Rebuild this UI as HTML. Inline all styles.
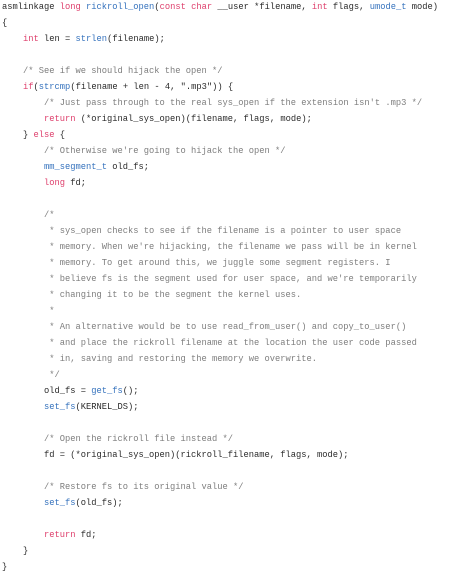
<!DOCTYPE html>
<html><head><meta charset="utf-8"><style>
html,body{margin:0;padding:0;background:#fff;width:461px;height:567px;overflow:hidden}
pre{margin:0;position:absolute;left:2px;top:-1px;font-family:"Liberation Mono",monospace;font-size:8.75px;line-height:16px;color:#2a2a2a}
.k{color:#de3f6c}.f{color:#3572bd}.c{color:#7e7e7e}
</style></head><body><pre>asmlinkage <span class="k">long</span> <span class="f">rickroll_open</span>(<span class="k">const</span> <span class="k">char</span> __user *filename, <span class="k">int</span> flags, <span class="f">umode_t</span> mode)
{
    <span class="k">int</span> len = <span class="f">strlen</span>(filename);

    <span class="c">/* See if we should hijack the open */</span>
    <span class="k">if</span>(<span class="f">strcmp</span>(filename + len - 4, ".mp3")) {
        <span class="c">/* Just pass through to the real sys_open if the extension isn't .mp3 */</span>
        <span class="k">return</span> (*original_sys_open)(filename, flags, mode);
    } <span class="k">else</span> {
        <span class="c">/* Otherwise we're going to hijack the open */</span>
        <span class="f">mm_segment_t</span> old_fs;
        <span class="k">long</span> fd;

        <span class="c">/*
         * sys_open checks to see if the filename is a pointer to user space
         * memory. When we're hijacking, the filename we pass will be in kernel
         * memory. To get around this, we juggle some segment registers. I
         * believe fs is the segment used for user space, and we're temporarily
         * changing it to be the segment the kernel uses.
         *
         * An alternative would be to use read_from_user() and copy_to_user()
         * and place the rickroll filename at the location the user code passed
         * in, saving and restoring the memory we overwrite.
         */</span>
        old_fs = <span class="f">get_fs</span>();
        <span class="f">set_fs</span>(KERNEL_DS);

        <span class="c">/* Open the rickroll file instead */</span>
        fd = (*original_sys_open)(rickroll_filename, flags, mode);

        <span class="c">/* Restore fs to its original value */</span>
        <span class="f">set_fs</span>(old_fs);

        <span class="k">return</span> fd;
    }
}</pre></body></html>
